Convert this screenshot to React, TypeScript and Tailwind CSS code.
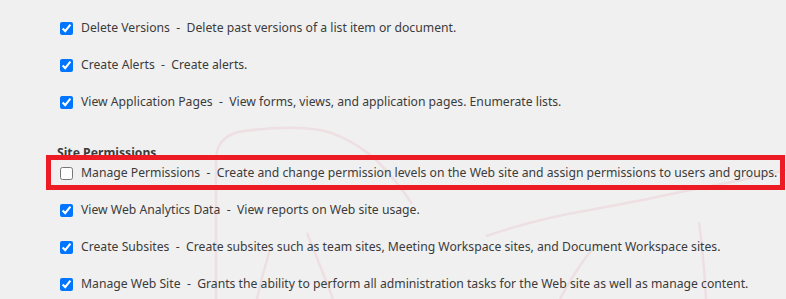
import React from "react";

type Perm = { name: string; desc: string; checked: boolean };

const listPerms: Perm[] = [
  { name: "Delete Versions", desc: "Delete past versions of a list item or document.", checked: true },
  { name: "Create Alerts", desc: "Create alerts.", checked: true },
  { name: "View Application Pages", desc: "View forms, views, and application pages. Enumerate lists.", checked: true },
];

const sitePerms: Perm[] = [
  { name: "Manage Permissions", desc: "Create and change permission levels on the Web site and assign permissions to users and groups.", checked: false },
  { name: "View Web Analytics Data", desc: "View reports on Web site usage.", checked: true },
  { name: "Create Subsites", desc: "Create subsites such as team sites, Meeting Workspace sites, and Document Workspace sites.", checked: true },
  { name: "Manage Web Site", desc: "Grants the ability to perform all administration tasks for the Web site as well as manage content.", checked: true },
];

const PermRow: React.FC<{ perm: Perm; highlight?: boolean }> = ({ perm, highlight }) => (
  <div className="relative flex items-center h-[37px] pl-[60px]">
    {highlight && (
      <div className="absolute left-[46px] top-[0px] w-[739px] h-[35px] border-[5px] border-[#ed1c24] pointer-events-none" />
    )}
    <input
      type="checkbox"
      defaultChecked={perm.checked}
      className="w-[13px] h-[13px] m-0 accent-[#0075ff] shrink-0"
    />
    <label className="ml-[8px] whitespace-pre">
      {perm.name}
      {"  -  "}
      {perm.desc}
    </label>
  </div>
);

export default function App() {
  return (
    <div className="relative w-[786px] h-[299px] overflow-hidden bg-[#f0f0f0] text-[12.2px] text-[#3b3b3b] font-['Segoe_UI','Noto_Sans',sans-serif]">
      {/* faint watermark behind the list */}
      <svg className="absolute inset-0 pointer-events-none" width="786" height="299" fill="none" stroke="#eddfe2" strokeWidth="2.5">
        <path d="M216 299 L216 158 Q217 138 238 132 Q290 124 325 131 Q355 140 378 162 Q398 182 412 204" />
        <path d="M307 233 Q320 265 333 299" />
        <path d="M270 250 Q262 275 257 299" />
        <path d="M486 236 Q540 218 590 210 Q645 200 700 188 Q745 180 786 170" />
        <path d="M699 222 Q704 260 706 299" />
        <path d="M560 299 Q575 270 597 243" />
      </svg>
      <div className="relative flex flex-col pt-[10px]">
        {listPerms.map((p) => (
          <PermRow key={p.name} perm={p} />
        ))}
        <div className="h-[34px] pt-[24px] pl-[57px]">
          <h3 className="font-bold leading-[16px]">Site Permissions</h3>
        </div>
        {sitePerms.map((p, i) => (
          <PermRow key={p.name} perm={p} highlight={i === 0} />
        ))}
      </div>
    </div>
  );
}
